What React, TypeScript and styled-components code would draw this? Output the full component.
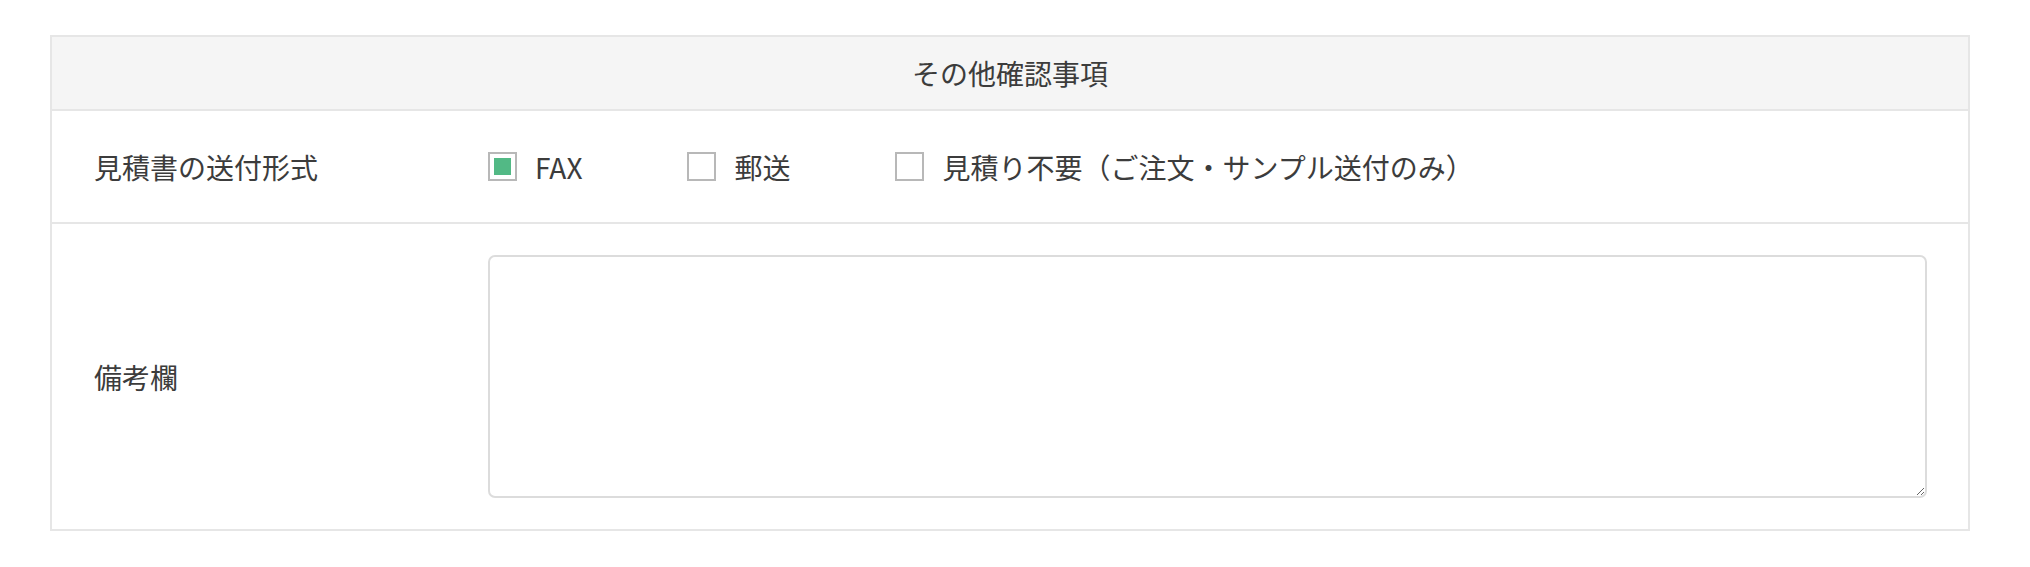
import { useState } from "react";
import styled, { createGlobalStyle } from "styled-components";

const GlobalStyle = createGlobalStyle`
    body {
        margin: 0;
        background: #fff;
        font-family: "Noto Sans CJK JP", "Noto Sans", sans-serif;
        color: #3c3c3c;
    }
`

const Page = styled.div`
    padding: 35px 60px 36px 50px;
`

const Table = styled.div`
    border: 2px solid #e6e6e6;
`

const Header = styled.div`
    height: 72px;
    display: flex;
    align-items: center;
    justify-content: center;
    background: #f5f5f5;
    font-size: 28px;
`

const Row = styled.div<{ $tall?: boolean }>`
    display: flex;
    align-items: center;
    border-top: 2px solid #e6e6e6;
    min-height: ${(p) => (p.$tall ? "auto" : "111px")};
    padding: ${(p) => (p.$tall ? "31px 0" : "0")};
`

const LabelCell = styled.div`
    width: 436px;
    flex-shrink: 0;
    box-sizing: border-box;
    padding-left: 42px;
    font-size: 28px;
`

const ValueCell = styled.div`
    flex: 1;
    padding-right: 41px;
    display: flex;
    align-items: center;
`

const Option = styled.label`
    display: inline-flex;
    align-items: center;
    gap: 18px;
    margin-right: 105px;
    font-size: 28px;
    cursor: pointer;
`

const CheckInput = styled.input`
    appearance: none;
    margin: 0;
    width: 29px;
    height: 29px;
    box-sizing: border-box;
    border: 2px solid #b8b8b8;
    background: #fff;
    padding: 4px;
    background-clip: content-box;
    cursor: pointer;
    &:checked {
        background-color: #52b985;
    }
`

const Memo = styled.textarea`
    width: 100%;
    height: 243px;
    box-sizing: border-box;
    border: 2px solid #dcdcdc;
    border-radius: 7px;
    padding: 12px 16px;
    font-family: inherit;
    font-size: 28px;
    color: #3c3c3c;
    outline: none;
    display: block;
`

type Choice = "fax" | "mail" | "none"

const choices: { id: Choice; text: string }[] = [
    { id: "fax", text: "FAX" },
    { id: "mail", text: "郵送" },
    { id: "none", text: "見積り不要（ご注文・サンプル送付のみ）" },
]

const App = () => {
    const [selected, setSelected] = useState<Choice[]>(["fax"]);
    const [memo, setMemo] = useState("");

    const toggle = (id: Choice) => {
        setSelected(selected.includes(id) ? selected.filter((s) => s !== id) : [...selected, id]);
    }

    return (
        <>
            <GlobalStyle />
            <Page>
                <Table>
                    <Header>その他確認事項</Header>
                    <Row>
                        <LabelCell>見積書の送付形式</LabelCell>
                        <ValueCell>
                            {choices.map((c) => (
                                <Option key={c.id}>
                                    <CheckInput
                                        type="checkbox"
                                        checked={selected.includes(c.id)}
                                        onChange={() => toggle(c.id)}
                                    />
                                    {c.text}
                                </Option>
                            ))}
                        </ValueCell>
                    </Row>
                    <Row $tall>
                        <LabelCell>備考欄</LabelCell>
                        <ValueCell>
                            <Memo value={memo} onChange={(e) => setMemo(e.target.value)} />
                        </ValueCell>
                    </Row>
                </Table>
            </Page>
        </>
    )
}

export default App;
